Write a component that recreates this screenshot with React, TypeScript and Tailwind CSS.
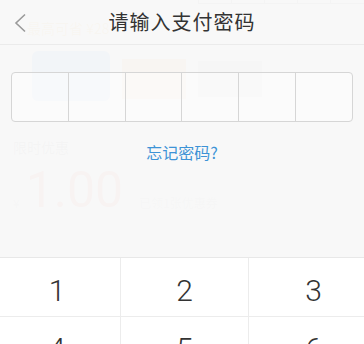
const keys = ["1", "2", "3", "4", "5", "6"];
const colPad = ["pr-[6px]", "", "pl-[14px]"];

export default function App() {
  return (
    <div className="relative w-[364px] h-[344px] overflow-hidden bg-white font-['Noto_Sans_CJK_SC',sans-serif]">
      {/* page underneath the sheet */}
      <div className="absolute inset-0">
        <div className="ml-[198px] flex h-[4px] border-b border-[#999]">
          {[0, 1, 2, 3, 4].map((i) => (
            <div key={i} className="w-[33px] border-l border-[#999]" />
          ))}
        </div>
        <div className="mt-[14px] ml-[27px] text-[14px] text-[#e8b64c]">最高可省 ¥28</div>
        <div className="mt-[12px] flex gap-[12px] pl-[32px]">
          <div className="h-[50px] w-[78px] rounded-[6px] bg-[#6aa6f0]" />
          <div className="mt-[8px] h-[40px] w-[64px] bg-[#f5b26a]" />
          <div className="mt-[10px] h-[36px] w-[64px] bg-[#bbbbbb]" />
        </div>
        <div className="mt-[36px] ml-[13px] text-[14px] leading-[20px] text-[#999]">限时优惠</div>
        <div className="mt-[12px] ml-[13px] flex items-end gap-[6px]">
          <span className="text-[12px] leading-[16px] text-[#bbb]">¥</span>
          <span className="font-['Roboto',sans-serif] text-[50px] leading-[42px] text-[#f27a6a]">1.00</span>
          <span className="ml-[10px] text-[12px] leading-[16px] text-[#bbb]">已领1张优惠券</span>
        </div>
      </div>

      {/* translucent sheet */}
      <div className="absolute inset-0 flex flex-col bg-[#f8f8f8]/[0.96]">
        <div className="relative flex h-[45px] shrink-0 items-center justify-center border-b border-[#ebebeb]">
          <svg className="absolute left-[13px] top-[13px]" width="14" height="20" viewBox="0 0 14 20">
            <path d="M12 1.5 L3 10 L12 18.5" fill="none" stroke="#9a9a9a" strokeWidth="1.6" />
          </svg>
          <span className="text-[20px] tracking-[1px] text-[#333]">请输入支付密码</span>
        </div>

        <div className="mx-[11px] mt-[27px] flex h-[50px] rounded-[4px] border border-[#d6d6d6] bg-white/40">
          {[0, 1, 2, 3, 4, 5].map((i) => (
            <div key={i} className={"flex-1 " + (i > 0 ? "border-l border-[#d6d6d6]" : "")} />
          ))}
        </div>

        <div className="mt-[18px] flex justify-center">
          <span className="text-[16px] leading-[24px] text-[#3d93d6]">忘记密码?</span>
        </div>

        <div className="mt-auto grid h-[87px] grid-cols-[120px_128px_1fr] border-t border-[#e8e8e8] bg-white font-['Roboto',sans-serif] font-light text-[#333]">
          {keys.map((k, i) => (
            <div
              key={k}
              className={
                "flex h-[58px] items-center justify-center pt-[6px] text-[30px] " +
                colPad[i % 3] +
                " " +
                (i % 3 !== 0 ? "border-l border-[#ececec] " : "") +
                (i > 2 ? "border-t border-[#ececec]" : "")
              }
            >
              {k}
            </div>
          ))}
        </div>
      </div>
    </div>
  );
}
